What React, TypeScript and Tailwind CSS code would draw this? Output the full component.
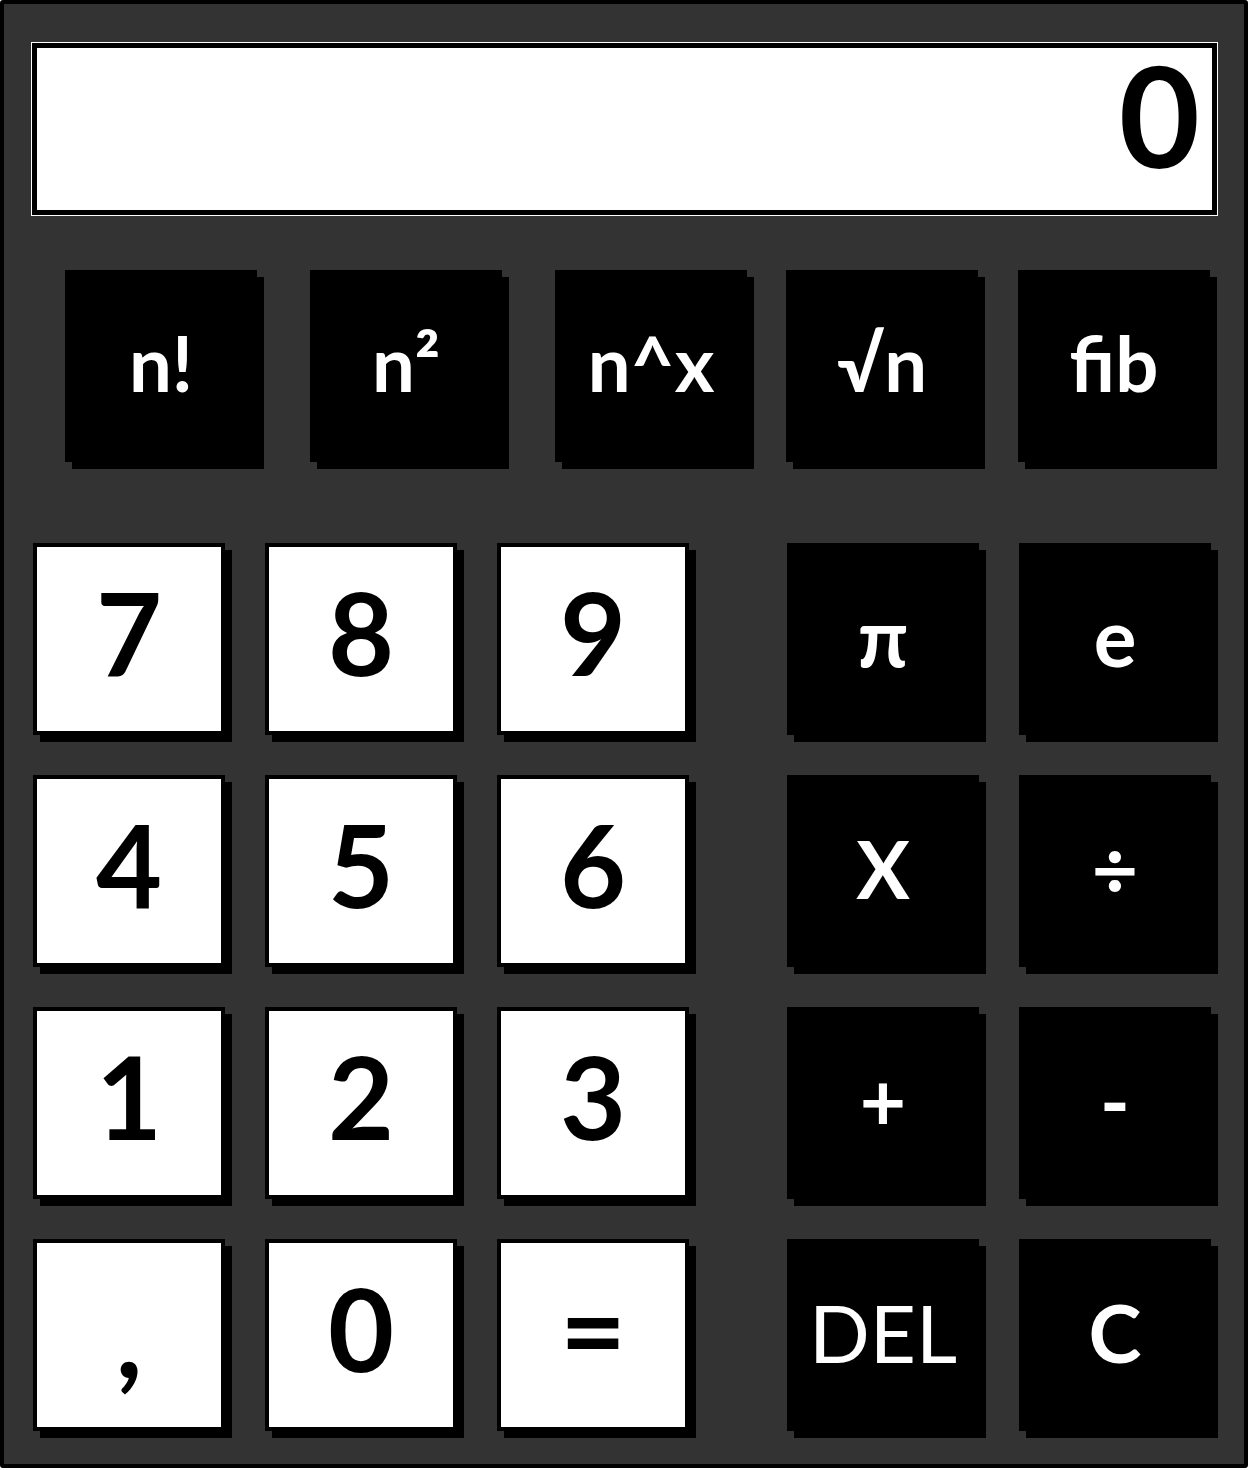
const font = { fontFamily: "Lato, 'Noto Sans', sans-serif" };

const topKeys = ["n!", "n²", "n^x", "√n", "fib"];
const numKeys = ["7", "8", "9", "4", "5", "6", "1", "2", "3", ",", "0", "="];
const opKeys = ["π", "e", "X", "÷", "+", "-", "DEL", "C"];

function DarkKey({ label, size }: { label: string; size: string }) {
  return (
    <button
      className={`flex h-[192px] w-[192px] items-center justify-center bg-black pb-[6px] font-bold leading-none text-white shadow-[7px_7px_0_#000] ${size}`}
    >
      {label}
    </button>
  );
}

function LightKey({ label }: { label: string }) {
  return (
    <button className="flex h-[192px] w-[192px] items-center justify-center border-[4px] border-black bg-white pb-[14px] text-[114px] font-bold leading-none text-black shadow-[7px_7px_0_#000]">
      <span className={label === "," ? "translate-y-[6px]" : ""}>{label}</span>
    </button>
  );
}

export default function App() {
  return (
    <div className="h-[1470px] w-[1250px] bg-white" style={font}>
      <div className="flex h-[1468px] w-[1248px] flex-col rounded-[3px] border-[4px] border-black bg-[#333333] px-[28px] pt-[39px]">
        <div className="flex h-[172px] w-[1185px] items-center justify-end border-[5px] border-black bg-white pb-[30px] pr-[12px] shadow-[0_0_0_1px_#fff]">
          <span className="text-[140px] font-bold leading-none text-black">0</span>
        </div>

        <div className="mt-[55px] flex">
          <div className="ml-[33px] flex gap-[53px]">
            {topKeys.slice(0, 3).map((k) => (
              <DarkKey key={k} label={k} size="text-[76px]" />
            ))}
          </div>
          <div className="ml-[39px] flex gap-[40px]">
            {topKeys.slice(3).map((k) => (
              <DarkKey key={k} label={k} size="text-[76px]" />
            ))}
          </div>
        </div>

        <div className="mt-[81px] flex">
          <div className="ml-[1px] grid grid-cols-[192px_192px_192px] gap-[40px]">
            {numKeys.map((k) => (
              <LightKey key={k} label={k} />
            ))}
          </div>
          <div className="ml-[98px] grid grid-cols-[192px_192px] gap-[40px]">
            {opKeys.map((k) => (
              <DarkKey key={k} label={k} size={k === "DEL" ? "text-[80px] font-normal" : "text-[80px]"} />
            ))}
          </div>
        </div>
      </div>
    </div>
  );
}
